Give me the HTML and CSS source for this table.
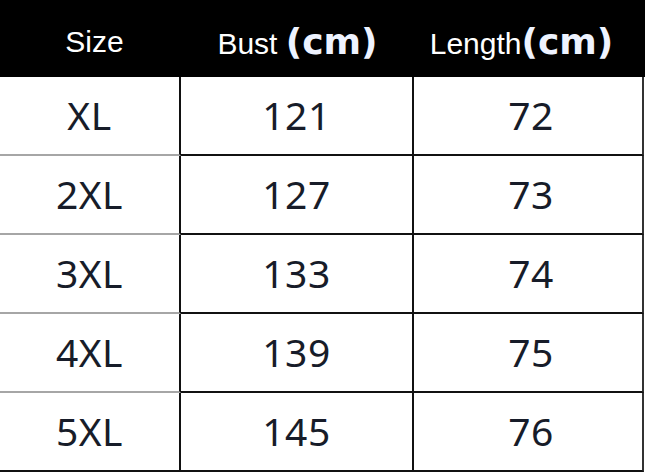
FILE: index.html
```html
<!DOCTYPE html>
<html>
<head>
<meta charset="utf-8">
<link rel="stylesheet" href="styles.css">
</head>
<body>
<div class="chart">
  <div class="head">
    <div class="hcell">Size</div>
    <div class="hcell">Bust <span class="unit">(cm)</span></div>
    <div class="hcell">Length<span class="unit">(cm)</span></div>
  </div>
  <div class="row">
    <div class="cell c1">XL</div><div class="cell c2">121</div><div class="cell c3">72</div>
  </div>
  <div class="row">
    <div class="cell c1">2XL</div><div class="cell c2">127</div><div class="cell c3">73</div>
  </div>
  <div class="row">
    <div class="cell c1">3XL</div><div class="cell c2">133</div><div class="cell c3">74</div>
  </div>
  <div class="row">
    <div class="cell c1">4XL</div><div class="cell c2">139</div><div class="cell c3">75</div>
  </div>
  <div class="row last">
    <div class="cell c1">5XL</div><div class="cell c2">145</div><div class="cell c3">76</div>
  </div>
</div>
</body>
</html>
```
FILE: styles.css
```css
html, body {
  margin: 0;
  padding: 0;
  background: #ffffff;
}
.chart {
  width: 645px;
  height: 476px;
  overflow: hidden;
}
.head {
  height: 77px;
  background: #000000;
  display: grid;
  grid-template-columns: 181px 233px 231px;
  align-items: center;
}
.hcell {
  color: #ffffff;
  font-family: "Liberation Sans", Arial, sans-serif;
  font-size: 30px;
  text-align: center;
  white-space: nowrap;
  padding-top: 6px;
}
.hcell:first-child {
  padding-left: 8px;
}
.hcell:last-child {
  padding-right: 16px;
}
.unit {
  font-family: "DejaVu Sans", sans-serif;
  font-weight: bold;
  font-size: 36px;
  color: #eef3ff;
}
.row {
  height: 79px;
  display: grid;
  grid-template-columns: 181px 233px 231px;
}
.cell {
  box-sizing: border-box;
  display: flex;
  align-items: center;
  justify-content: center;
  font-family: "Noto Sans", "Open Sans", sans-serif;
  font-size: 39px;
  color: #171c29;
  letter-spacing: 0.5px;
  border-bottom: 2px solid #111111;
  padding-bottom: 2px;
}
.c1 {
  border-right: 2px solid #111111;
  border-bottom-color: #a6a6a6;
}
.c2 {
  border-right: 2px solid #111111;
}
.c3 {
  width: 230px;
  border-right: 2px solid #333333;
  padding-left: 6px;
}
.row.last .c1 {
  border-bottom-color: #111111;
}
```
